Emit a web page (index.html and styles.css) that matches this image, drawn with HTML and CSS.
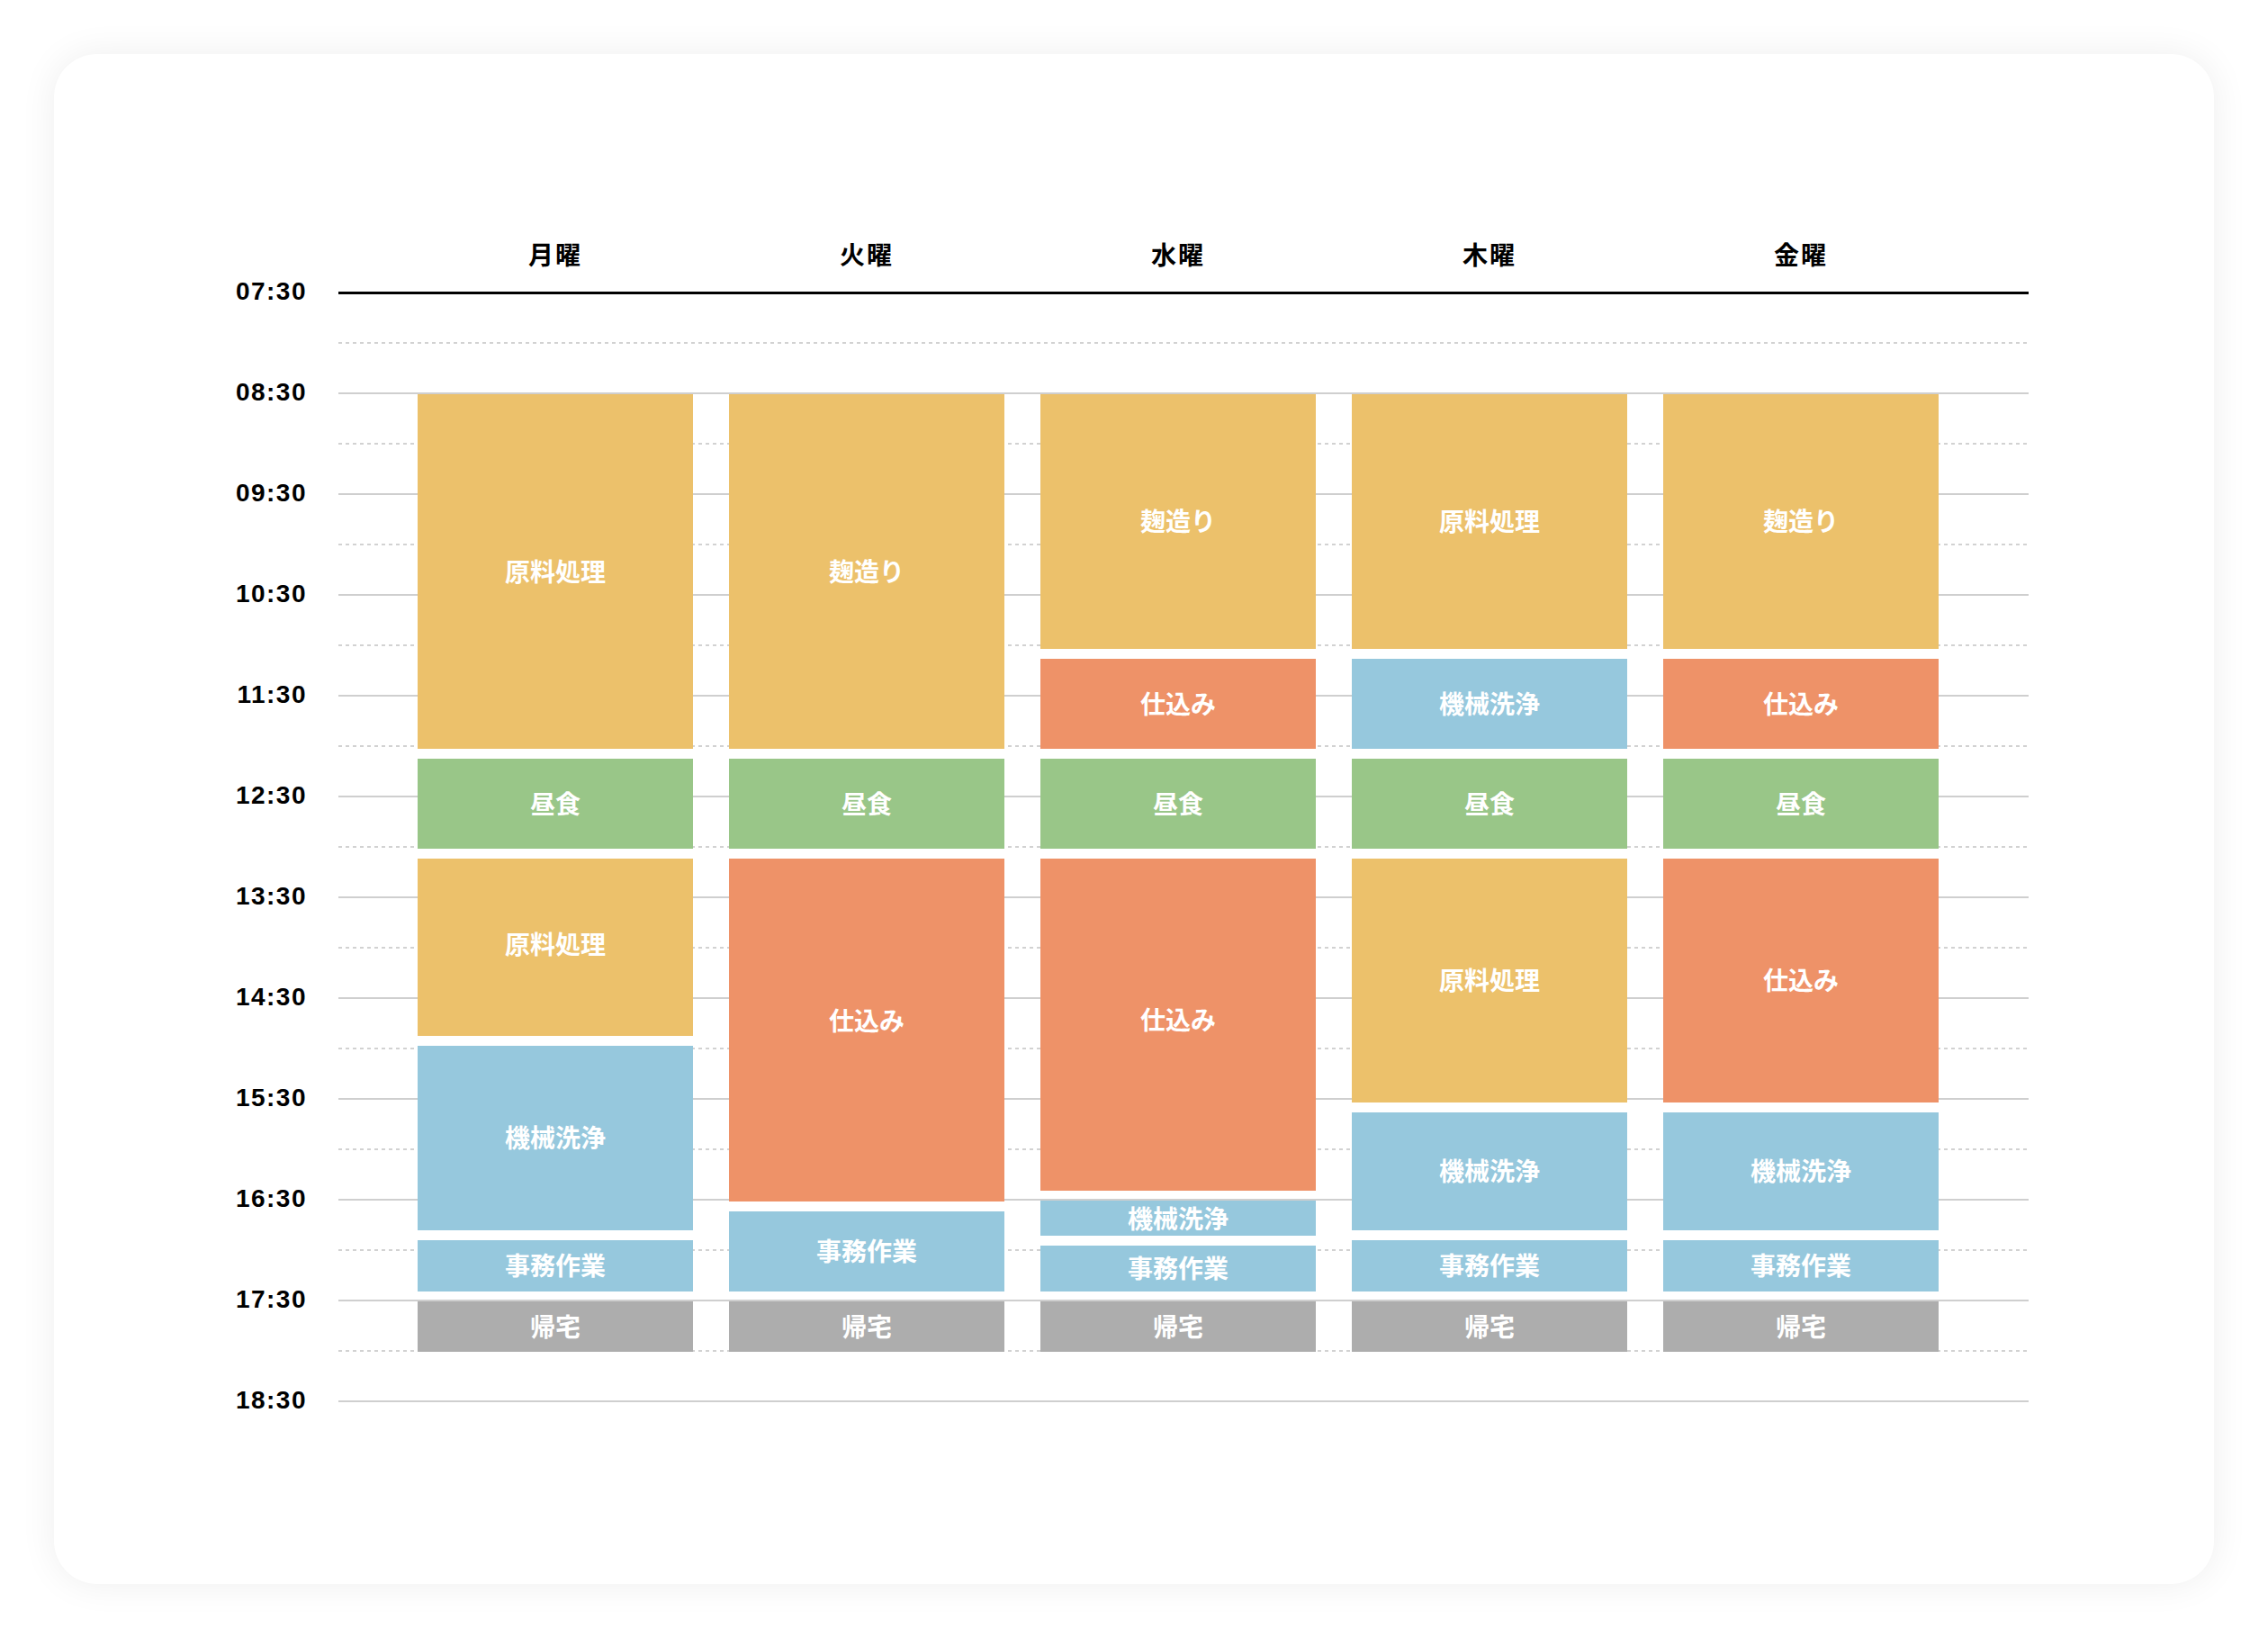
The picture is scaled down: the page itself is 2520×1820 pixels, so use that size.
FILE: index.html
```html
<!DOCTYPE html>
<html lang="ja">
<head>
<meta charset="utf-8">
<title>週間スケジュール</title>
<link rel="stylesheet" href="styles.css">
</head>
<body>
<div class="card">
  <div class="chart">
    <div class="days-head">
      <div>月曜</div><div>火曜</div><div>水曜</div><div>木曜</div><div>金曜</div>
    </div>
    <div class="body">
      <div class="rows">
        <div class="row"><div class="t">07:30</div><div class="track"></div></div>
        <div class="row"><div class="t">08:30</div><div class="track"></div></div>
        <div class="row"><div class="t">09:30</div><div class="track"></div></div>
        <div class="row"><div class="t">10:30</div><div class="track"></div></div>
        <div class="row"><div class="t">11:30</div><div class="track"></div></div>
        <div class="row"><div class="t">12:30</div><div class="track"></div></div>
        <div class="row"><div class="t">13:30</div><div class="track"></div></div>
        <div class="row"><div class="t">14:30</div><div class="track"></div></div>
        <div class="row"><div class="t">15:30</div><div class="track"></div></div>
        <div class="row"><div class="t">16:30</div><div class="track"></div></div>
        <div class="row"><div class="t">17:30</div><div class="track"></div></div>
        <div class="row"><div class="t">18:30</div><div class="track"></div></div>
      </div>
      <div class="days">
        <div class="col">
          <div class="b y" style="height:394px">原料処理</div>
          <div class="b g" style="height:100px">昼食</div>
          <div class="b y lift-s" style="height:197px">原料処理</div>
          <div class="b bl" style="height:205px">機械洗浄</div>
          <div class="b bl" style="height:57px">事務作業</div>
          <div class="b k" style="height:56px">帰宅</div>
        </div>
        <div class="col">
          <div class="b y" style="height:394px">麹造り</div>
          <div class="b g" style="height:100px">昼食</div>
          <div class="b o lift-l" style="height:381px">仕込み</div>
          <div class="b bl" style="height:89px">事務作業</div>
          <div class="b k" style="height:56px">帰宅</div>
        </div>
        <div class="col">
          <div class="b y" style="height:283px">麹造り</div>
          <div class="b o" style="height:100px">仕込み</div>
          <div class="b g" style="height:100px">昼食</div>
          <div class="b o lift-m" style="height:369px">仕込み</div>
          <div class="b bl slim" style="height:39px">機械洗浄</div>
          <div class="b bl" style="height:51px">事務作業</div>
          <div class="b k" style="height:56px">帰宅</div>
        </div>
        <div class="col">
          <div class="b y" style="height:283px">原料処理</div>
          <div class="b bl" style="height:100px">機械洗浄</div>
          <div class="b g" style="height:100px">昼食</div>
          <div class="b y" style="height:271px">原料処理</div>
          <div class="b bl" style="height:131px">機械洗浄</div>
          <div class="b bl" style="height:57px">事務作業</div>
          <div class="b k" style="height:56px">帰宅</div>
        </div>
        <div class="col">
          <div class="b y" style="height:283px">麹造り</div>
          <div class="b o" style="height:100px">仕込み</div>
          <div class="b g" style="height:100px">昼食</div>
          <div class="b o" style="height:271px">仕込み</div>
          <div class="b bl" style="height:131px">機械洗浄</div>
          <div class="b bl" style="height:57px">事務作業</div>
          <div class="b k" style="height:56px">帰宅</div>
        </div>
      </div>
    </div>
  </div>
</div>
</body>
</html>
```

FILE: styles.css
```css
* { box-sizing: border-box; }

body {
  margin: 0;
  background: #fff;
  font-family: "Noto Sans CJK JP", "Noto Sans", sans-serif;
}

.card {
  margin: 60px;
  width: 2400px;
  height: 1700px;
  background: #fff;
  border-radius: 48px;
  box-shadow: 0 0 40px rgba(0, 0, 0, 0.07);
  padding-top: 202px;
}

.chart {
  display: grid;
  grid-template-columns: 281px 1878px;
  column-gap: 35px;
}

.days-head {
  grid-column: 2;
  display: grid;
  grid-template-columns: repeat(5, 306px);
  column-gap: 40px;
  padding-left: 88px;
  height: 40px;
  margin-bottom: 22px;
}

.days-head div {
  text-align: center;
  font-weight: 700;
  font-size: 28px;
  line-height: 40px;
  letter-spacing: 2px;
  color: #000;
}

.body {
  grid-column: 1 / -1;
  display: grid;
  grid-template-columns: 281px 1878px;
  column-gap: 35px;
}

.rows {
  grid-column: 1 / -1;
  grid-row: 1;
}

.row {
  display: grid;
  grid-template-columns: 281px 1878px;
  column-gap: 35px;
  height: 112px;
}

.row:last-child { height: 2px; }

.t {
  font-family: "Liberation Sans", Arial, sans-serif;
  font-weight: 700;
  font-size: 28px;
  line-height: 36px;
  margin-top: -18px;
  text-align: right;
  letter-spacing: 1.5px;
  color: #000;
}

.track {
  border-top: 2px solid #cfcfcf;
  background: linear-gradient(to right, #d2d2d2 50%, transparent 50%) 0 54px / 8px 2px repeat-x;
}

.row:first-child .track {
  border-top: 3px solid #000;
  background-position: 0 53px;
}

.row:last-child .track { background: none; }

.days {
  grid-column: 2;
  grid-row: 1;
  padding-top: 114px;
  padding-left: 88px;
  display: grid;
  grid-template-columns: repeat(5, 306px);
  column-gap: 40px;
  align-items: start;
}

.col {
  display: flex;
  flex-direction: column;
  gap: 11px;
}

.b {
  display: flex;
  align-items: center;
  justify-content: center;
  color: #fff;
  font-weight: 700;
  font-size: 28px;
  line-height: 1;
  padding-bottom: 3px;
}

.b.slim { padding-bottom: 1px; }
.b.lift-s { padding-bottom: 10px; }
.b.lift-m { padding-bottom: 14px; }
.b.lift-l { padding-bottom: 24px; }

.y { background: #ecc16b; }
.g { background: #99c688; }
.o { background: #ee9268; }
.bl { background: #96c8dd; }
.k { background: #adadad; }
```
